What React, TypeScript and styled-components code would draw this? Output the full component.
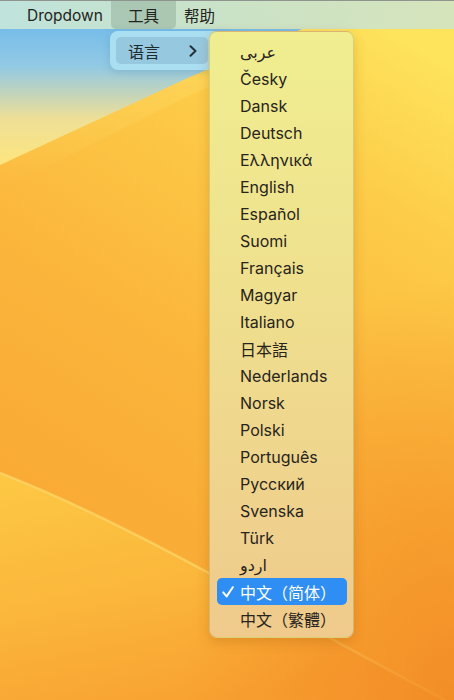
import React from 'react';
import styled, { createGlobalStyle } from 'styled-components';

const wallpaper = `<svg xmlns='http://www.w3.org/2000/svg' width='454' height='700' viewBox='0 0 454 700'>
<defs>
<linearGradient id='m' x1='0.75' y1='0' x2='0.35' y2='1'>
<stop offset='0' stop-color='#fee35c'/><stop offset='0.22' stop-color='#fdcc48'/><stop offset='0.55' stop-color='#fbb53b'/><stop offset='1' stop-color='#f8a532'/>
</linearGradient>
<linearGradient id='s' x1='0' y1='0' x2='0' y2='1'>
<stop offset='0' stop-color='#62b4ec'/><stop offset='0.4' stop-color='#92c9e4'/><stop offset='0.72' stop-color='#eedf96'/><stop offset='1' stop-color='#fde67e'/>
</linearGradient>
<linearGradient id='l' x1='0' y1='0' x2='0.4' y2='1'>
<stop offset='0' stop-color='#fdc844'/><stop offset='0.5' stop-color='#fbb83c'/><stop offset='1' stop-color='#f8a232'/>
</linearGradient>
<radialGradient id='o' cx='1' cy='1' r='0.6'>
<stop offset='0' stop-color='#f28a24' stop-opacity='0.9'/><stop offset='1' stop-color='#f28a24' stop-opacity='0'/>
</radialGradient>
<linearGradient id='b' x1='0' y1='0' x2='0' y2='1'>
<stop offset='0' stop-color='#fde070' stop-opacity='0.55'/><stop offset='1' stop-color='#fde070' stop-opacity='0'/>
</linearGradient>
</defs>
<rect width='454' height='700' fill='url(#m)'/>
<path d='M0 0 L370 0 L190 77 L0 165 Z' fill='url(#s)'/>
<path d='M0 165 L190 77 L370 0 L420 0 L190 95 L0 190 Z' fill='url(#b)'/>
<path d='M0 473 C120 520 220 580 454 705 L0 705 Z' fill='url(#l)'/>
<path d='M0 473 C120 520 220 580 454 705' fill='none' stroke='#fed86a' stroke-width='2.5' stroke-opacity='0.7'/>
<rect width='454' height='700' fill='url(#o)'/>
</svg>`;

const GlobalStyle = createGlobalStyle`
  html, body {
    margin: 0;
    padding: 0;
  }

  body {
    font-family: Inter, "Noto Sans CJK SC", "DejaVu Sans", sans-serif;
    -webkit-font-smoothing: antialiased;
  }
`;

const Desktop = styled.div`
  position: relative;
  width: 454px;
  height: 700px;
  overflow: hidden;
  background-color: #fbb53b;
  background-image: url("data:image/svg+xml;utf8,${encodeURIComponent(wallpaper)}");
  background-size: 454px 700px;
`;

const MenuBar = styled.div`
  display: flex;
  align-items: stretch;
  height: 28px;
  padding-left: 19px;
  border-top: 1px solid #8f948f;
  background: linear-gradient(90deg, #bfe3dc 0%, #c9e2c8 45%, #d6e4bb 100%);
`;

const BarItem = styled.div<{ $active?: boolean }>`
  display: flex;
  align-items: center;
  padding: 0 ${({ $active }) => ($active ? '17px' : '8px')};
  font-size: 15.5px;
  color: #1f2320;
  border-radius: 0 0 5px 5px;
  background: ${({ $active }) => ($active ? 'rgba(120, 150, 130, 0.35)' : 'transparent')};
`;

const Panel = styled.div`
  position: absolute;
  top: 31px;
  border-radius: 8px;
  box-sizing: border-box;
`;

const ToolsMenu = styled(Panel)`
  left: 110px;
  width: 120px;
  height: 39px;
  padding: 6px;
  background: #aadff1;
  box-shadow: 0 2px 8px rgba(40, 90, 120, 0.18);
`;

const ToolsRow = styled.div`
  display: flex;
  align-items: center;
  justify-content: space-between;
  height: 27px;
  padding: 0 0 0 12px;
  width: 92px;
  box-sizing: border-box;
  border-radius: 5px;
  background: #96c9df;
  font-size: 16px;
  color: #1f2a2e;
`;

const Chevron = styled.svg`
  width: 8px;
  height: 12px;
  margin-right: 11px;
`;

const LanguageMenu = styled(Panel)`
  left: 209px;
  width: 145px;
  height: 607px;
  padding: 6px 6px 6px 7px;
  display: flex;
  flex-direction: column;
  background: linear-gradient(180deg, #f0ee90 0%, #efdf8e 45%, #efca8c 100%);
  border: 0.5px solid rgba(150, 120, 40, 0.25);
  box-shadow: 0 4px 12px rgba(150, 80, 0, 0.25);
`;

const LangItem = styled.div<{ $selected?: boolean }>`
  position: relative;
  display: flex;
  align-items: center;
  height: 27px;
  flex-shrink: 0;
  padding-left: 23px;
  border-radius: 5px;
  font-size: 16px;
  white-space: nowrap;
  color: ${({ $selected }) => ($selected ? '#ffffff' : '#272420')};
  background: ${({ $selected }) => ($selected ? '#2f8ef4' : 'transparent')};
`;

const Check = styled.svg`
  position: absolute;
  left: 5px;
  top: 8px;
  width: 12px;
  height: 12px;
`;

const languages = [
  'عربى',
  'Česky',
  'Dansk',
  'Deutsch',
  'Ελληνικά',
  'English',
  'Español',
  'Suomi',
  'Français',
  'Magyar',
  'Italiano',
  '日本語',
  'Nederlands',
  'Norsk',
  'Polski',
  'Português',
  'Русский',
  'Svenska',
  'Türk',
  'اردو',
  '中文（简体）',
  '中文（繁體）',
];

const App = () => {
  return (
    <Desktop>
      <GlobalStyle />
      <MenuBar>
        <BarItem>Dropdown</BarItem>
        <BarItem $active>工具</BarItem>
        <BarItem>帮助</BarItem>
      </MenuBar>

      <ToolsMenu>
        <ToolsRow>
          <span>语言</span>
          <Chevron viewBox="0 0 8 12">
            <path d="M1.5 1.2 L6.5 6 L1.5 10.8" fill="none" stroke="#24313a" strokeWidth="2" strokeLinecap="round" strokeLinejoin="round" />
          </Chevron>
        </ToolsRow>
      </ToolsMenu>

      <LanguageMenu>
        {languages.map((lang) => {
          const selected = lang === '中文（简体）';
          return (
            <LangItem key={lang} $selected={selected}>
              {selected && (
                <Check viewBox="0 0 12 12">
                  <path d="M1.2 6.4 L4.6 10.4 L10.8 1.2" fill="none" stroke="#ffffff" strokeWidth="2" strokeLinecap="round" strokeLinejoin="round" />
                </Check>
              )}
              <span dir="auto">{lang}</span>
            </LangItem>
          );
        })}
      </LanguageMenu>
    </Desktop>
  );
};

export default App;
